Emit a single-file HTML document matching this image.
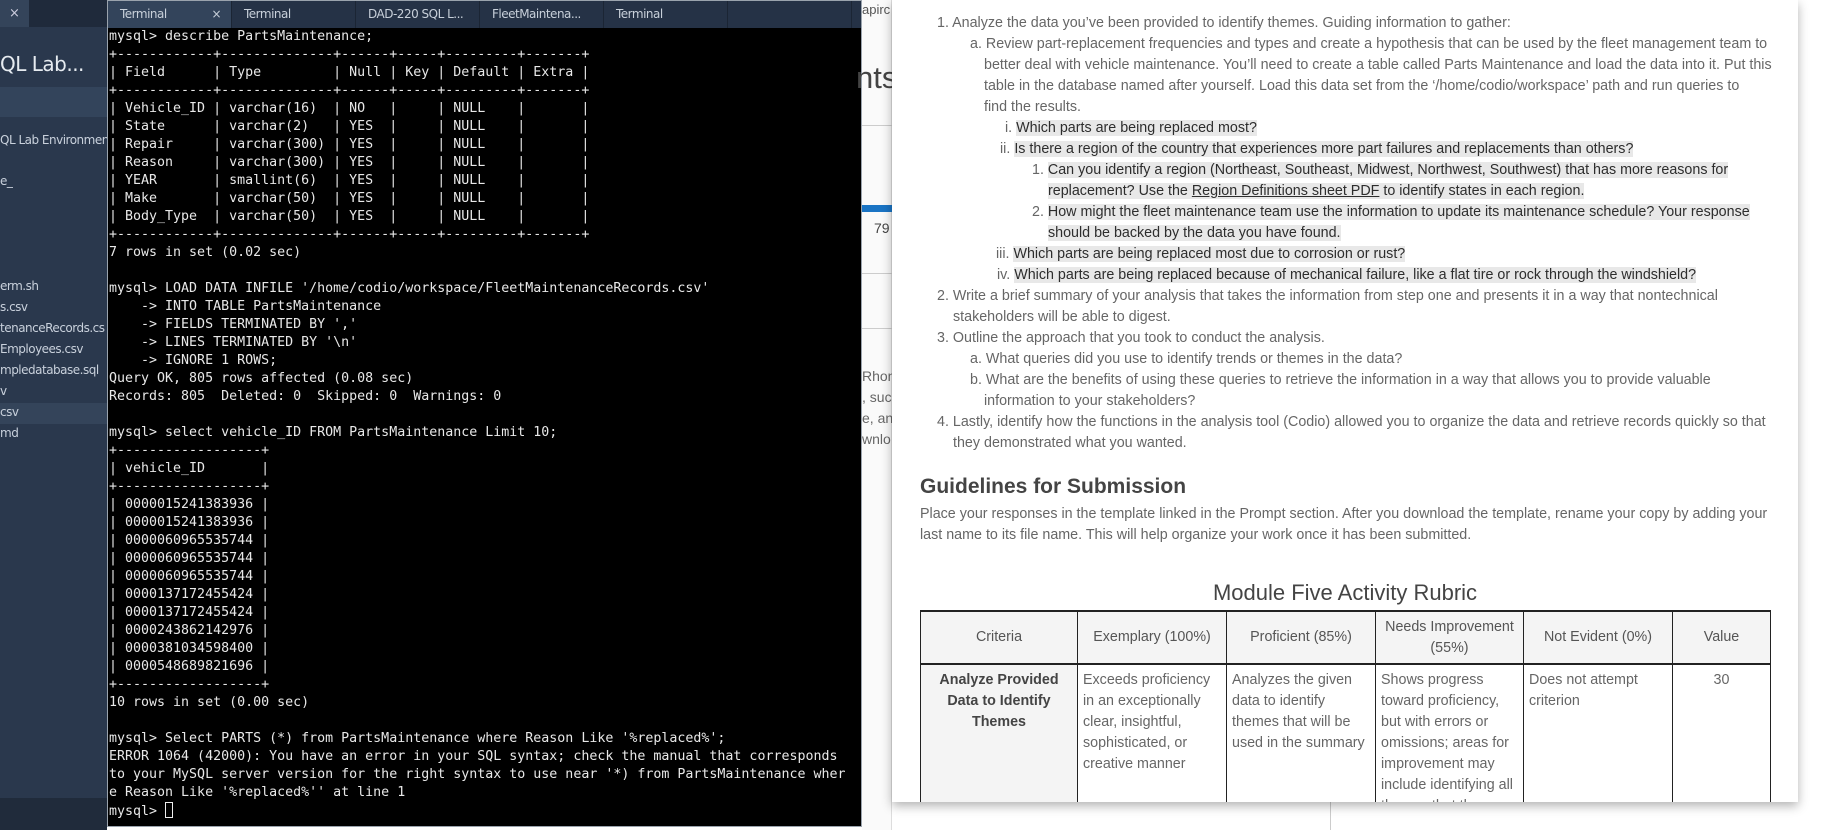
<!DOCTYPE html>
<html><head><meta charset="utf-8"><style>
*{margin:0;padding:0;box-sizing:border-box}
body{width:1822px;height:830px;overflow:hidden;background:#fff;position:relative;font-family:"Liberation Sans",sans-serif}
.abs{position:absolute}
#side{left:0;top:0;width:107px;height:830px;background:#2a384d;color:#c9d1dc;font-family:"DejaVu Sans",sans-serif;overflow:hidden}
#side .t{position:absolute;left:0;font-size:12px;white-space:nowrap;letter-spacing:-0.5px}
#term{left:107px;top:0;width:755px;height:827px;background:#000;border:1px solid #9aa3ad;overflow:hidden}
#tabs{position:absolute;left:0;top:0;width:100%;height:27px;background:#253246}
.tab{position:absolute;top:0;height:27px;width:124px;color:#c8d0da;font-family:"DejaVu Sans",sans-serif;font-size:12px;line-height:27px;padding-left:12px;border-right:1px solid #1b2534;letter-spacing:-0.5px}
pre{position:absolute;left:1px;top:27px;color:#e8e8e8;font-family:"DejaVu Sans Mono",monospace;font-size:13.3px;line-height:18px}
#bg{left:862px;top:0;width:960px;height:830px;background:#fff}
#card{left:892px;top:0;width:906px;height:802px;background:#fff;box-shadow:0 4px 10px rgba(0,0,0,.3);overflow:hidden;color:#666;font-size:14.3px}
.l{position:absolute;white-space:nowrap;line-height:21px}
.h{background:#e8e8e8;color:#2d2d2d}
table{position:absolute;left:28px;top:610px;border-collapse:collapse;font-size:14.3px;color:#666}
td,th{border:1px solid #222;vertical-align:top;line-height:21px;padding:5px 5px}
th{background:#f4f4f4;font-weight:normal;vertical-align:middle;text-align:center;border-top:2px solid #222;border-bottom:2px solid #222;color:#555;padding:3px 5px}
</style></head><body>
<div id="side" class="abs">
 <div class="abs" style="left:0;top:0;width:107px;height:27px;background:#1f2a3b"></div>
 <div class="abs" style="left:0;top:0;width:29px;height:27px;background:#34445a;color:#ccd;text-align:center;line-height:27px;font-size:13px">×</div>
 <div class="t" style="top:52px;font-size:20px;color:#e6ebf0">QL Lab...</div>
 <div class="abs" style="left:0;top:87px;width:107px;height:30px;background:#33445b"></div>
 <div class="t" style="top:133px">QL Lab Environment</div>
 <div class="t" style="top:174px">e_</div>
 <div class="t" style="top:279px">erm.sh</div>
 <div class="t" style="top:300px">s.csv</div>
 <div class="t" style="top:321px">tenanceRecords.cs</div>
 <div class="t" style="top:342px">Employees.csv</div>
 <div class="t" style="top:363px">mpledatabase.sql</div>
 <div class="t" style="top:384px">v</div>
 <div class="abs" style="left:0;top:403px;width:107px;height:21px;background:#34445a"></div>
 <div class="t" style="top:405px">csv</div>
 <div class="t" style="top:426px">md</div>
 <div class="abs" style="left:0;top:798px;width:107px;height:32px;background:#202b3b"></div>
</div>
<div id="term" class="abs">
 <div id="tabs">
  <div class="tab" style="left:0;background:#33445b">Terminal<span style="position:absolute;right:10px">×</span></div>
  <div class="tab" style="left:124px">Terminal</div>
  <div class="tab" style="left:248px">DAD-220 SQL L...</div>
  <div class="tab" style="left:372px">FleetMaintena...</div>
  <div class="tab" style="left:496px">Terminal</div>
  <div class="tab" style="left:620px"></div>
 </div>
<pre>mysql&gt; describe PartsMaintenance;
+------------+--------------+------+-----+---------+-------+
| Field      | Type         | Null | Key | Default | Extra |
+------------+--------------+------+-----+---------+-------+
| Vehicle_ID | varchar(16)  | NO   |     | NULL    |       |
| State      | varchar(2)   | YES  |     | NULL    |       |
| Repair     | varchar(300) | YES  |     | NULL    |       |
| Reason     | varchar(300) | YES  |     | NULL    |       |
| YEAR       | smallint(6)  | YES  |     | NULL    |       |
| Make       | varchar(50)  | YES  |     | NULL    |       |
| Body_Type  | varchar(50)  | YES  |     | NULL    |       |
+------------+--------------+------+-----+---------+-------+
7 rows in set (0.02 sec)

mysql&gt; LOAD DATA INFILE '/home/codio/workspace/FleetMaintenanceRecords.csv'
    -&gt; INTO TABLE PartsMaintenance
    -&gt; FIELDS TERMINATED BY ','
    -&gt; LINES TERMINATED BY '\n'
    -&gt; IGNORE 1 ROWS;
Query OK, 805 rows affected (0.08 sec)
Records: 805  Deleted: 0  Skipped: 0  Warnings: 0

mysql&gt; select vehicle_ID FROM PartsMaintenance Limit 10;
+------------------+
| vehicle_ID       |
+------------------+
| 0000015241383936 |
| 0000015241383936 |
| 0000060965535744 |
| 0000060965535744 |
| 0000060965535744 |
| 0000137172455424 |
| 0000137172455424 |
| 0000243862142976 |
| 0000381034598400 |
| 0000548689821696 |
+------------------+
10 rows in set (0.00 sec)

mysql&gt; Select PARTS (*) from PartsMaintenance where Reason Like '%replaced%';
ERROR 1064 (42000): You have an error in your SQL syntax; check the manual that corresponds
to your MySQL server version for the right syntax to use near '*) from PartsMaintenance wher
e Reason Like '%replaced%'' at line 1
mysql&gt; <span style="display:inline-block;width:8px;height:16px;border:1px solid #eee;vertical-align:-3px"></span></pre>
</div>
<div id="bg" class="abs">
 <div class="abs" style="left:0;top:0;width:30px;height:830px;background:#fafafa;border-right:1px solid #ddd"></div>
 <div class="abs" style="left:0;top:2px;font-size:13px;color:#555">apirc</div>
 <div class="abs" style="left:-6px;top:60px;font-size:31px;color:#444">nts</div>
 <div class="abs" style="left:0;top:125px;width:30px;height:1px;background:#ccc"></div>
 <div class="abs" style="left:0;top:205px;width:30px;height:7px;background:#1a74c4"></div>
 <div class="abs" style="left:12px;top:220px;font-size:14px;color:#444">79</div>
 <div class="abs" style="left:0;top:273px;width:30px;height:1px;background:#ccc"></div>
 <div class="abs" style="left:0;top:328px;width:30px;height:1px;background:#ccc"></div>
 <div class="abs" style="left:0;top:366px;font-size:14px;color:#666;line-height:21px">Rhon<br>, suc<br>e, an<br>wnlo</div>
 <div class="abs" style="left:468px;top:802px;width:1px;height:28px;background:#ccc"></div>
</div>
<div id="card" class="abs">
 <div class="l" style="left:45px;top:13px">1. Analyze the data you’ve been provided to identify themes. Guiding information to gather:</div>
 <div class="l" style="left:78px;top:34px">a. Review part-replacement frequencies and types and create a hypothesis that can be used by the fleet management team to</div>
 <div class="l" style="left:92px;top:55px">better deal with vehicle maintenance. You’ll need to create a table called Parts Maintenance and load the data into it. Put this</div>
 <div class="l" style="left:92px;top:76px">table in the database named after yourself. Load this data set from the ‘/home/codio/workspace’ path and run queries to</div>
 <div class="l" style="left:92px;top:97px">find the results.</div>
 <div class="l" style="left:113px;top:118px">i. <span class="h">Which parts are being replaced most?</span></div>
 <div class="l" style="left:108px;top:139px">ii. <span class="h">Is there a region of the country that experiences more part failures and replacements than others?</span></div>
 <div class="l" style="left:140px;top:160px">1. <span class="h">Can you identify a region (Northeast, Southeast, Midwest, Northwest, Southwest) that has more reasons for</span></div>
 <div class="l" style="left:156px;top:181px"><span class="h">replacement? Use the <u>Region Definitions sheet PDF</u> to identify states in each region.</span></div>
 <div class="l" style="left:140px;top:202px">2. <span class="h">How might the fleet maintenance team use the information to update its maintenance schedule? Your response</span></div>
 <div class="l" style="left:156px;top:223px"><span class="h">should be backed by the data you have found.</span></div>
 <div class="l" style="left:104px;top:244px">iii. <span class="h">Which parts are being replaced most due to corrosion or rust?</span></div>
 <div class="l" style="left:105px;top:265px">iv. <span class="h">Which parts are being replaced because of mechanical failure, like a flat tire or rock through the windshield?</span></div>
 <div class="l" style="left:45px;top:286px">2. Write a brief summary of your analysis that takes the information from step one and presents it in a way that nontechnical</div>
 <div class="l" style="left:61px;top:307px">stakeholders will be able to digest.</div>
 <div class="l" style="left:45px;top:328px">3. Outline the approach that you took to conduct the analysis.</div>
 <div class="l" style="left:78px;top:349px">a. What queries did you use to identify trends or themes in the data?</div>
 <div class="l" style="left:78px;top:370px">b. What are the benefits of using these queries to retrieve the information in a way that allows you to provide valuable</div>
 <div class="l" style="left:92px;top:391px">information to your stakeholders?</div>
 <div class="l" style="left:45px;top:412px">4. Lastly, identify how the functions in the analysis tool (Codio) allowed you to organize the data and retrieve records quickly so that</div>
 <div class="l" style="left:61px;top:433px">they demonstrated what you wanted.</div>
 <div class="l" style="left:28px;top:473px;font-size:21px;color:#444;line-height:28px;font-weight:bold">Guidelines for Submission</div>
 <div class="l" style="left:28px;top:504px">Place your responses in the template linked in the Prompt section. After you download the template, rename your copy by adding your</div>
 <div class="l" style="left:28px;top:525px">last name to its file name. This will help organize your work once it has been submitted.</div>
 <div class="l" style="left:0;width:906px;text-align:center;top:578px;font-size:22px;color:#444;line-height:30px">Module Five Activity Rubric</div>
 <table>
  <tr style="height:53px"><th style="width:157px">Criteria</th><th style="width:149px">Exemplary (100%)</th><th style="width:149px">Proficient (85%)</th><th style="width:148px">Needs Improvement<br>(55%)</th><th style="width:149px">Not Evident (0%)</th><th style="width:98px">Value</th></tr>
  <tr><td style="text-align:center;background:#f4f4f4;color:#444;font-weight:bold">Analyze Provided<br>Data to Identify<br>Themes</td><td>Exceeds proficiency<br>in an exceptionally<br>clear, insightful,<br>sophisticated, or<br>creative manner</td><td>Analyzes the given<br>data to identify<br>themes that will be<br>used in the summary</td><td>Shows progress<br>toward proficiency,<br>but with errors or<br>omissions; areas for<br>improvement may<br>include identifying all<br>themes that the</td><td>Does not attempt<br>criterion</td><td style="text-align:center">30</td></tr>
 </table>
</div>
</body></html>
